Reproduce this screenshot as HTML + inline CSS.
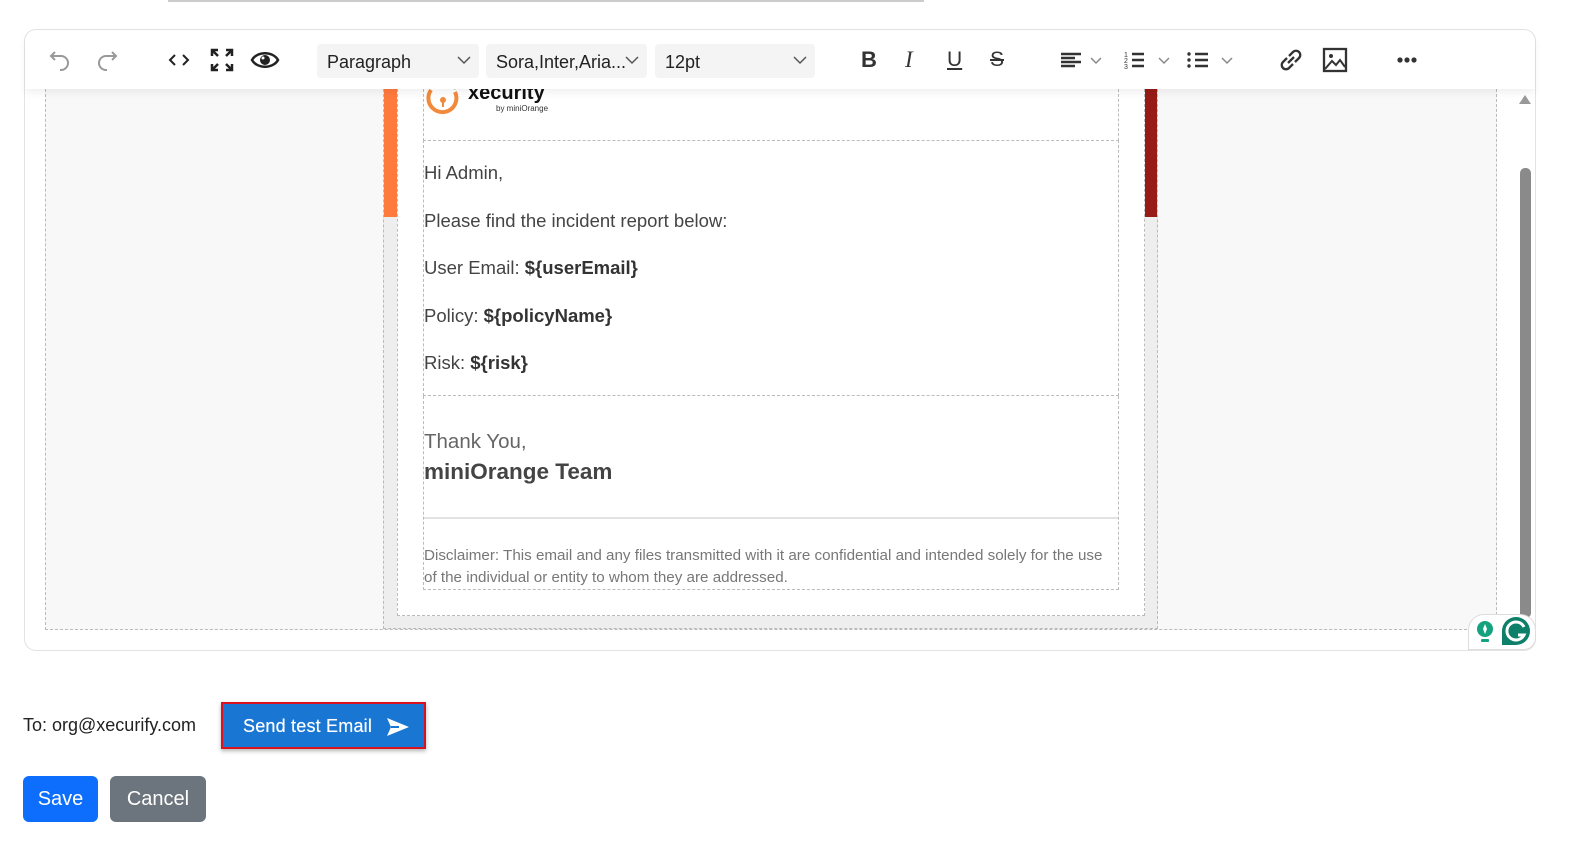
<!DOCTYPE html>
<html><head><meta charset="utf-8"><style>
*{box-sizing:border-box;margin:0;padding:0}
body{width:1572px;height:841px;background:#fff;font-family:"Liberation Sans",sans-serif;position:relative;overflow:hidden}
.abs{position:absolute}
.sel{position:absolute;top:44px;height:34px;background:#f4f4f5;border-radius:4px;font-size:18px;color:#222;padding:8px 0 0 10px}
.sel svg{position:absolute;right:8px;top:11px}
.ic{position:absolute;top:46px}
.t{position:absolute;left:424px;font-size:18.5px;color:#444}
</style></head><body>
<div class="abs" style="left:168px;top:0;width:756px;height:2px;background:#ccc"></div>
<div class="abs" style="left:24px;top:29px;width:1512px;height:622px;border:1px solid #e3e3e3;border-radius:12px;background:#fff"></div>
<div class="abs" style="left:45px;top:89px;width:1452px;height:541px;background:#f8f8f8;border:1px dashed #bbb;border-top:none"></div>
<div class="abs" style="left:383px;top:89px;width:775px;height:540px;background:#eee;border:1px dashed #bbb;border-top:none"></div>
<div class="abs" style="left:384px;top:89px;width:13px;height:128px;background:#ff7a3d"></div>
<div class="abs" style="left:1145px;top:89px;width:12px;height:128px;background:#971c16"></div>
<div class="abs" style="left:397px;top:89px;width:748px;height:527px;background:#fff;border:1px dashed #bbb;border-top:none"></div>
<div class="abs" style="left:423px;top:89px;width:696px;height:52px;border:1px dashed #bbb;border-top:none"></div>
<div class="abs" style="left:423px;top:140px;width:696px;height:256px;border-left:1px dashed #bbb;border-right:1px dashed #bbb;border-bottom:1px dashed #bbb"></div>
<div class="abs" style="left:423px;top:396px;width:696px;height:194px;border-left:1px dashed #bbb;border-right:1px dashed #bbb;border-bottom:1px dashed #bbb"></div>
<div class="abs" style="left:424px;top:517px;width:694px;height:2px;background:#e2e2e2"></div>
<svg class="abs" style="left:425px;top:84px" width="36" height="34" viewBox="0 0 36 34"><path d="M6 6 A14 14 0 1 0 30 8" fill="none" stroke="#f28a3c" stroke-width="4"/><circle cx="18" cy="16" r="3" fill="#f28a3c"/><rect x="17" y="16" width="2" height="7" fill="#f28a3c"/><circle cx="30" cy="3" r="2.5" fill="#7cbf3a"/></svg>
<div class="abs" style="left:468px;top:82px;font-size:20px;font-weight:bold;color:#111">xecurity</div>
<div class="abs" style="left:496px;top:104px;font-size:8px;color:#333">by miniOrange</div>
<div class="t" style="top:162px">Hi Admin,</div>
<div class="t" style="top:210px">Please find the incident report below:</div>
<div class="t" style="top:257px">User Email: <b style="color:#333">${userEmail}</b></div>
<div class="t" style="top:305px">Policy: <b style="color:#333">${policyName}</b></div>
<div class="t" style="top:352px">Risk: <b style="color:#333">${risk}</b></div>
<div class="t" style="top:430px;font-size:20.5px;color:#666">Thank You,</div>
<div class="t" style="top:459px;font-size:22.5px;font-weight:bold;color:#444">miniOrange Team</div>
<div class="t" style="top:545px;font-size:15.2px;color:#777;line-height:22px;width:690px">Disclaimer: This email and any files transmitted with it are confidential and intended solely for the use of the individual or entity to whom they are addressed.</div>
<div class="abs" style="left:1519px;top:95px;width:0;height:0;border-left:6px solid transparent;border-right:6px solid transparent;border-bottom:9px solid #999"></div>
<div class="abs" style="left:1520px;top:168px;width:11px;height:450px;background:#8a8a8a;border-radius:5px"></div>
<div class="abs" style="left:1468px;top:614px;width:68px;height:36px;background:#fff;border:1px solid #ddd;border-radius:16px 16px 12px 0"></div>
<svg class="abs" style="left:1474px;top:620px" width="22" height="24" viewBox="0 0 22 24"><circle cx="11" cy="9" r="8" fill="#15a37f"/><path d="M11 4l2 5-2 5-2-5z" fill="#fff"/><rect x="7" y="19" width="8" height="3" rx="1" fill="#15a37f"/></svg>
<svg class="abs" style="left:1500px;top:616px" width="32" height="30" viewBox="0 0 32 30"><path d="M16 1a14 14 0 1 1 0 28H2V15A14 14 0 0 1 16 1z" fill="#0e7f68"/><path d="M24 11a9 9 0 1 0 0 8h-6" fill="none" stroke="#fff" stroke-width="3"/></svg>
<div class="abs" style="left:25px;top:30px;width:1510px;height:59px;background:#fff;border-radius:12px 12px 0 0;box-shadow:0 4px 8px rgba(0,0,0,.06)"></div>
<svg class="ic" style="left:48px" width="26" height="28" viewBox="0 0 26 28"><path d="M7 6L3 10l4 4M3 10h10a7 7 0 0 1 0 14h-1" fill="none" stroke="#999" stroke-width="2"/></svg>
<svg class="ic" style="left:93px" width="26" height="28" viewBox="0 0 26 28"><path d="M19 6l4 4-4 4M23 10H13a7 7 0 0 0 0 14h1" fill="none" stroke="#999" stroke-width="2"/></svg>
<svg class="ic" style="left:166px" width="26" height="28" viewBox="0 0 26 28"><path d="M9 9l-5 5 5 5M17 9l5 5-5 5" fill="none" stroke="#222" stroke-width="2"/></svg>
<svg class="ic" style="left:209px" width="26" height="28" viewBox="0 0 26 28"><path d="M3 10V4h6M3 4l6 6M23 10V4h-6M23 4l-6 6M3 18v6h6M3 24l6-6M23 18v6h-6M23 24l-6-6" fill="none" stroke="#222" stroke-width="2.5"/></svg>
<svg class="ic" style="left:250px" width="30" height="28" viewBox="0 0 30 28"><path d="M2 14C7 5 23 5 28 14 23 23 7 23 2 14z" fill="none" stroke="#222" stroke-width="2.5"/><circle cx="15" cy="14" r="5" fill="#222"/><circle cx="13" cy="12" r="1.5" fill="#fff"/></svg>
<div class="sel" style="left:317px;width:162px">Paragraph<svg width="14" height="10"><path d="M1 2l6 6 6-6" fill="none" stroke="#555" stroke-width="1.5"/></svg></div>
<div class="sel" style="left:486px;width:161px">Sora,Inter,Aria...<svg width="14" height="10"><path d="M1 2l6 6 6-6" fill="none" stroke="#555" stroke-width="1.5"/></svg></div>
<div class="sel" style="left:655px;width:160px">12pt<svg width="14" height="10"><path d="M1 2l6 6 6-6" fill="none" stroke="#555" stroke-width="1.5"/></svg></div>
<div class="abs" style="left:861px;top:47px;font-size:22px;font-weight:bold;color:#333">B</div>
<div class="abs" style="left:905px;top:47px;font-size:23px;font-style:italic;font-family:'Liberation Serif',serif;color:#333">I</div>
<div class="abs" style="left:947px;top:48px;font-size:21px;color:#333;text-decoration:underline">U</div>
<div class="abs" style="left:990px;top:48px;font-size:21px;color:#333;text-decoration:line-through">S</div>
<svg class="ic" style="left:1058px" width="50" height="28" viewBox="0 0 50 28"><path d="M3 8h20M3 12h14M3 16h20M3 20h14" stroke="#333" stroke-width="2.5"/><path d="M33 12l5 5 5-5" fill="none" stroke="#888" stroke-width="1.5"/></svg>
<svg class="ic" style="left:1122px" width="50" height="28" viewBox="0 0 50 28"><path d="M10 8h12M10 14h12M10 20h12" stroke="#333" stroke-width="2.5"/><text x="2" y="11" font-size="7" fill="#333">1</text><text x="2" y="17" font-size="7" fill="#333">2</text><text x="2" y="23" font-size="7" fill="#333">3</text><path d="M37 12l5 5 5-5" fill="none" stroke="#888" stroke-width="1.5"/></svg>
<svg class="ic" style="left:1186px" width="50" height="28" viewBox="0 0 50 28"><path d="M9 8h13M9 14h13M9 20h13" stroke="#333" stroke-width="2.5"/><circle cx="3" cy="8" r="1.7" fill="#333"/><circle cx="3" cy="14" r="1.7" fill="#333"/><circle cx="3" cy="20" r="1.7" fill="#333"/><path d="M36 12l5 5 5-5" fill="none" stroke="#888" stroke-width="1.5"/></svg>
<svg class="ic" style="left:1277px" width="28" height="28" viewBox="0 0 28 28"><path d="M12 10l4-4a4 4 0 0 1 6 6l-4 4M16 18l-4 4a4 4 0 0 1-6-6l4-4M11 17l6-6" fill="none" stroke="#333" stroke-width="2.3"/></svg>
<svg class="ic" style="left:1321px" width="28" height="28" viewBox="0 0 28 28"><rect x="3" y="3" width="22" height="22" fill="none" stroke="#333" stroke-width="2.3"/><circle cx="10" cy="10" r="2" fill="#333"/><path d="M4 23l7-8 4 4 4-5 5 7" fill="none" stroke="#333" stroke-width="2"/></svg>
<svg class="ic" style="left:1396px" width="24" height="28" viewBox="0 0 24 28"><circle cx="4" cy="14" r="2.6" fill="#333"/><circle cx="11" cy="14" r="2.6" fill="#333"/><circle cx="18" cy="14" r="2.6" fill="#333"/></svg>
<div class="abs" style="left:23px;top:715px;font-size:18px;color:#222">To: org@xecurify.com</div>
<div class="abs" style="left:221px;top:702px;width:205px;height:47px;border:2px solid #d9121f;background:#1976d2;color:#fff;font-size:18px;padding:12px 0 0 20px;box-shadow:0 2px 4px rgba(0,0,0,.3);text-shadow:0 0 0.5px #fff;letter-spacing:0.2px">Send test Email</div>
<svg class="abs" style="left:385px;top:716px" width="26" height="22" viewBox="0 0 26 22"><path d="M2 2l22 9-22 9 4-9z" fill="#fff"/><path d="M6 11h8" stroke="#1976d2" stroke-width="2"/></svg>
<div class="abs" style="left:23px;top:776px;width:75px;height:46px;background:#0d6efd;border-radius:6px;color:#fff;font-size:20px;text-align:center;padding-top:12px">Save</div>
<div class="abs" style="left:110px;top:776px;width:96px;height:46px;background:#6c757d;border-radius:6px;color:#fff;font-size:20px;text-align:center;padding-top:12px">Cancel</div>
</body></html>
